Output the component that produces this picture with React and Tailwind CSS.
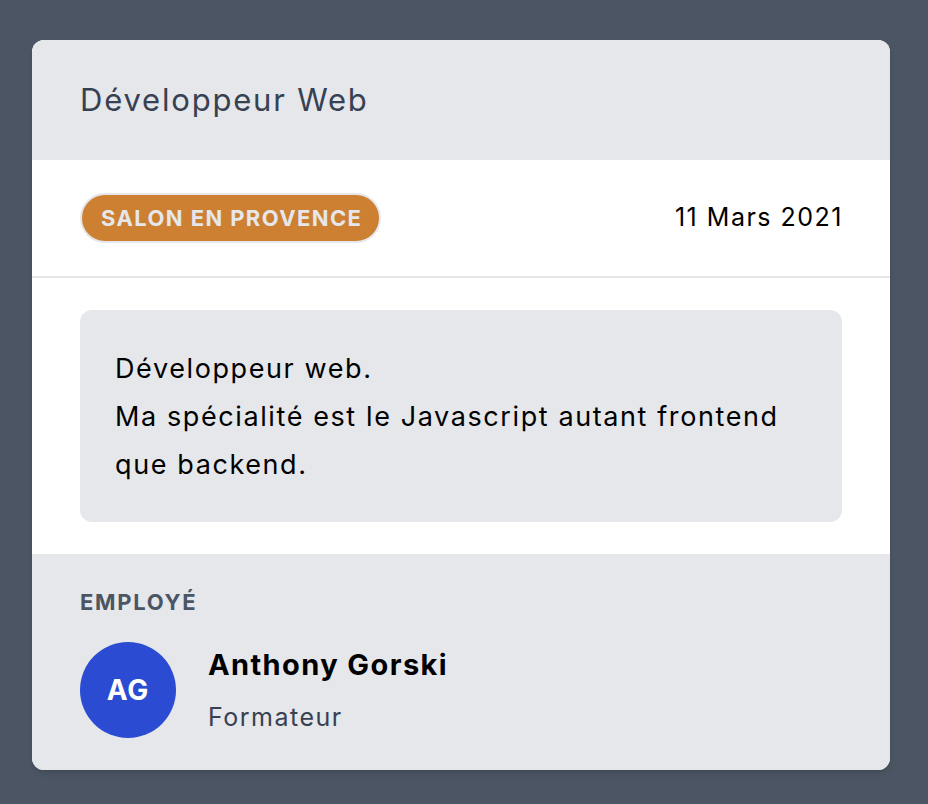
import React from 'react';

const App = () => {
  return (
    <div className="min-h-screen bg-[#4b5563] pt-10 pl-8" style={{ fontFamily: 'Inter, "Noto Sans", sans-serif' }}>
      <div className="w-[858px] rounded-xl overflow-hidden bg-white shadow-md">
        {/* Header */}
        <div className="bg-[#e5e7eb] h-[120px] flex items-center px-12">
          <h1 className="text-[31px] text-[#374151] tracking-[1.8px]">Développeur Web</h1>
        </div>

        {/* Location and date */}
        <div className="h-[118px] flex items-center justify-between px-12 border-b-2 border-[#e5e7eb]">
          <span className="rounded-full border-2 border-[#e5e7eb] bg-[#cd7f32] pl-[19px] pr-[17px] h-[50px] flex items-center text-[22px] font-bold uppercase tracking-[1.4px] text-[#e5e7eb]">
            Salon en Provence
          </span>
          <span className="text-[25px] text-black tracking-[1.5px] -mr-[1px]">11 Mars 2021</span>
        </div>

        {/* Description */}
        <div className="px-12 pt-[32px] pb-[32px]">
          <div className="bg-[#e5e7eb] rounded-xl pl-[35px] pr-[30px] pt-[35px] pb-[33px] text-[27px] leading-[48px] tracking-[1.6px] text-black">
            <p>Développeur web.</p>
            <p>Ma spécialité est le Javascript autant frontend que backend.</p>
          </div>
        </div>

        {/* Employee */}
        <div className="bg-[#e5e7eb] px-12 pt-[34px] pb-[32px]">
          <div className="text-[22px] leading-[28px] font-bold uppercase tracking-[1.7px] text-[#4b5563]">Employé</div>
          <div className="mt-[26px] flex items-center gap-8">
            <div className="w-24 h-24 rounded-full bg-[#2a4bd2] flex items-center justify-center text-white text-[28px] font-bold tracking-[1px]">
              AG
            </div>
            <div className="flex flex-col gap-[18px]">
              <span className="text-[29px] font-bold text-black leading-[36px] tracking-[1.4px]">Anthony Gorski</span>
              <span className="text-[25px] text-[#374151] leading-[32px] tracking-[1.5px]">Formateur</span>
            </div>
          </div>
        </div>
      </div>
    </div>
  );
};

export default App;
